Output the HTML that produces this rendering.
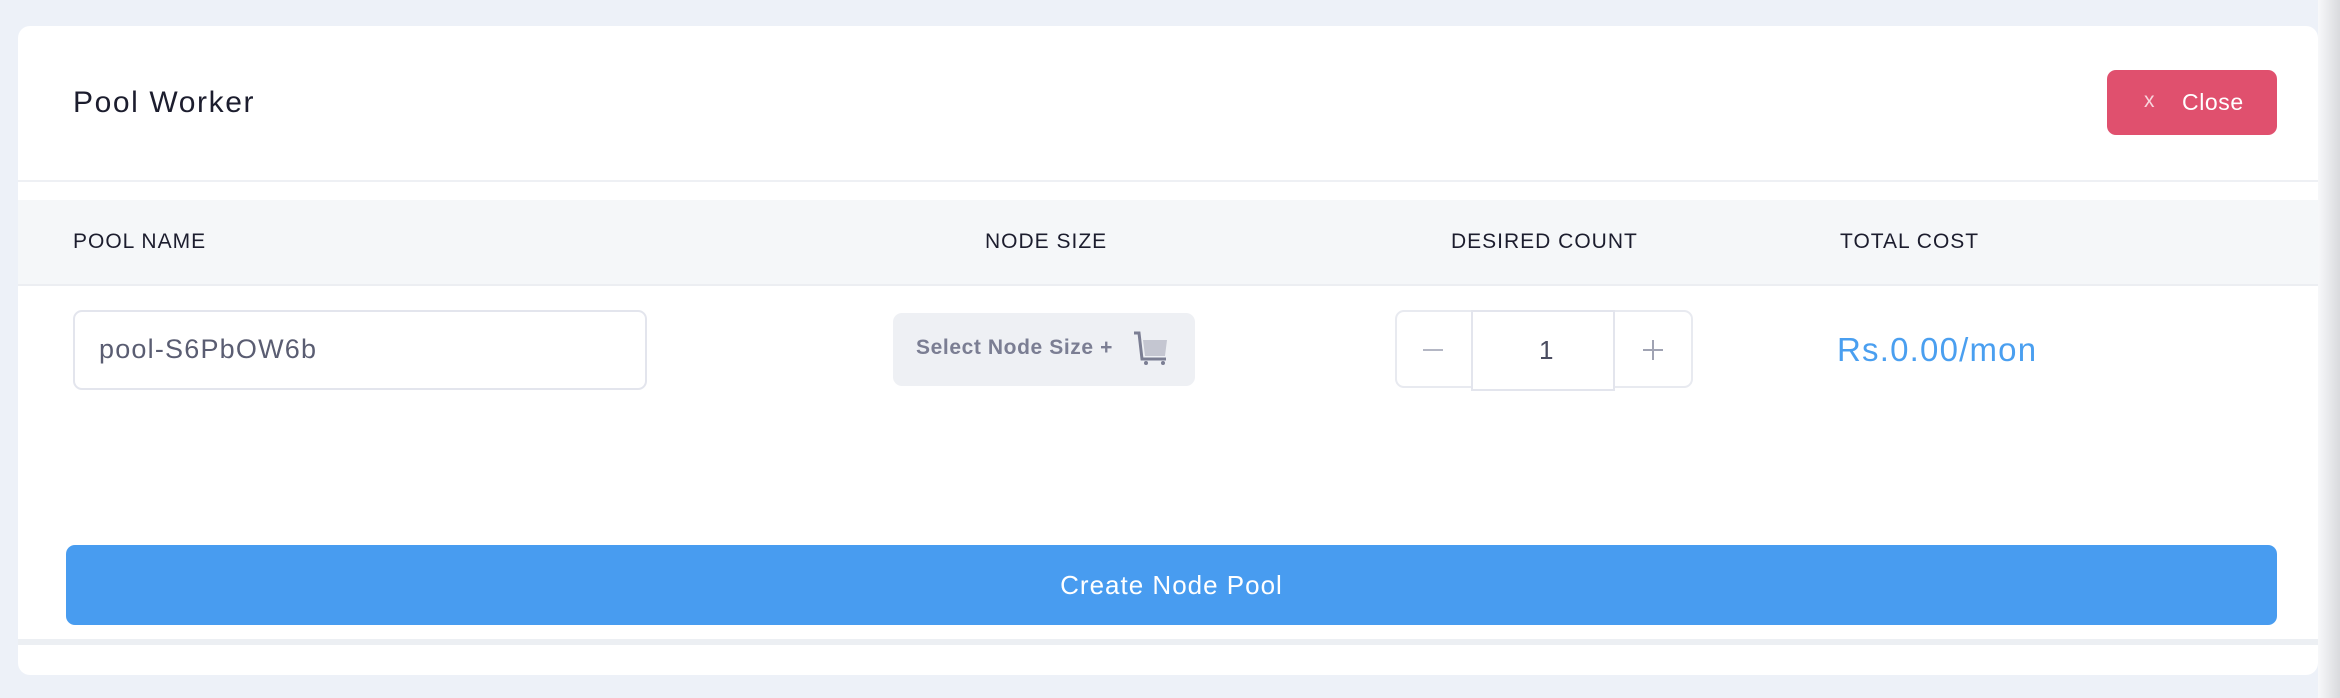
<!DOCTYPE html>
<html><head><style>
*{margin:0;padding:0;box-sizing:border-box}
body{width:2340px;height:698px;background:#edf1f8;position:relative;overflow:hidden;font-family:"Liberation Sans",sans-serif}
.a{position:absolute}
.card{left:18px;top:26px;width:2300px;height:649px;background:#fff;border-radius:12px}
.hd{font-size:21px;font-weight:500;color:#1c1d2e;top:230px;letter-spacing:1px}
</style></head><body>
<div class="a card"></div>
<div class="a" style="left:2318px;top:0;width:22px;height:698px;background:linear-gradient(90deg,#f7f8fa,#d9dadd)"></div>
<div class="a" style="left:73px;top:86px;font-size:30px;font-weight:500;color:#1c1d2e;letter-spacing:1.6px">Pool Worker</div>
<div class="a" style="left:2107px;top:70px;width:170px;height:65px;background:#e0506e;border-radius:9px;color:#fff;font-size:23px">
 <span class="a" style="left:37px;top:19px;font-size:21px;color:#f8d5dd">x</span>
 <span class="a" style="left:75px;top:19px;letter-spacing:0.6px">Close</span>
</div>
<div class="a" style="left:18px;top:180px;width:2300px;height:2px;background:#eef0f4"></div>
<div class="a" style="left:18px;top:200px;width:2300px;height:84px;background:#f5f7f9"></div>
<div class="a" style="left:18px;top:284px;width:2300px;height:2px;background:#eceef2"></div>
<div class="a hd" style="left:73px">POOL NAME</div>
<div class="a hd" style="left:985px">NODE SIZE</div>
<div class="a hd" style="left:1451px">DESIRED COUNT</div>
<div class="a hd" style="left:1840px">TOTAL COST</div>
<div class="a" style="left:73px;top:310px;width:574px;height:80px;border:2px solid #e3e5ed;border-radius:9px"></div>
<div class="a" style="left:99px;top:334px;font-size:27px;color:#5a5d72;letter-spacing:1.2px">pool-S6PbOW6b</div>
<div class="a" style="left:893px;top:313px;width:302px;height:73px;background:#eef0f4;border-radius:9px"></div>
<div class="a" style="left:916px;top:336px;font-size:21px;font-weight:bold;color:#7b7e93;letter-spacing:0.6px">Select Node Size +</div>
<svg class="a" style="left:1132px;top:331px" width="38" height="36" viewBox="0 0 38 36"><path d="M2 2h5l3 26h24" fill="none" stroke="#7b7e93" stroke-width="3"/><path d="M11 9h24l-2 16H13z" fill="#c4c6d1"/><circle cx="14" cy="32" r="2" fill="#7b7e93"/><circle cx="31" cy="32" r="2" fill="#7b7e93"/></svg>
<div class="a" style="left:1395px;top:310px;width:298px;height:78px;border:2px solid #e8eaf0;border-radius:9px"></div>
<div class="a" style="left:1471px;top:310px;width:144px;height:81px;border:2px solid #e3e5ed;background:#fff"></div>
<div class="a" style="left:1423px;top:349px;width:20px;height:2px;background:#b4b7c4"></div>
<div class="a" style="left:1539px;top:335px;font-size:26px;color:#4a4c60">1</div>
<div class="a" style="left:1643px;top:349px;width:20px;height:2px;background:#a0a3b3"></div>
<div class="a" style="left:1652px;top:340px;width:2px;height:20px;background:#a0a3b3"></div>
<div class="a" style="left:1837px;top:331px;font-size:33px;font-weight:500;color:#4a9ff0;letter-spacing:1.2px">Rs.0.00/mon</div>
<div class="a" style="left:66px;top:545px;width:2211px;height:80px;background:#489cf0;border-radius:9px;color:#fff;font-size:26px;text-align:center;line-height:80px;letter-spacing:1px">Create Node Pool</div>
<div class="a" style="left:18px;top:639px;width:2300px;height:6px;background:#eceff3"></div>
</body></html>
